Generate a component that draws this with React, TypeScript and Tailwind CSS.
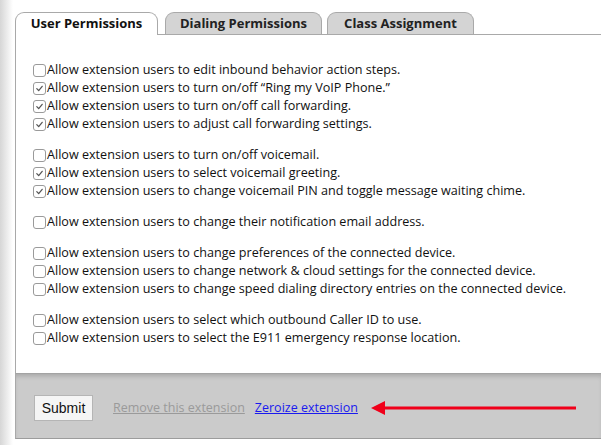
const groups: { label: string; checked: boolean }[][] = [
  [
    { label: "Allow extension users to edit inbound behavior action steps.", checked: false },
    { label: "Allow extension users to turn on/off \u201cRing my VoIP Phone.\u201d", checked: true },
    { label: "Allow extension users to turn on/off call forwarding.", checked: true },
    { label: "Allow extension users to adjust call forwarding settings.", checked: true },
  ],
  [
    { label: "Allow extension users to turn on/off voicemail.", checked: false },
    { label: "Allow extension users to select voicemail greeting.", checked: true },
    { label: "Allow extension users to change voicemail PIN and toggle message waiting chime.", checked: true },
  ],
  [{ label: "Allow extension users to change their notification email address.", checked: false }],
  [
    { label: "Allow extension users to change preferences of the connected device.", checked: false },
    { label: "Allow extension users to change network & cloud settings for the connected device.", checked: false },
    { label: "Allow extension users to change speed dialing directory entries on the connected device.", checked: false },
  ],
  [
    { label: "Allow extension users to select which outbound Caller ID to use.", checked: false },
    { label: "Allow extension users to select the E911 emergency response location.", checked: false },
  ],
];

function Checkbox({ checked }: { checked: boolean }) {
  return (
    <span className="flex h-[13px] w-[13px] shrink-0 items-center justify-center rounded-[3px] border border-[#9a9a9a] bg-white">
      {checked && (
        <svg viewBox="0 0 10 10" className="h-[9px] w-[9px]">
          <path d="M2 5.2 L4.1 7.4 L8 2.6" fill="none" stroke="#555" strokeWidth="1.4" strokeLinecap="round" strokeLinejoin="round" />
        </svg>
      )}
    </span>
  );
}

export default function App() {
  return (
    <div className="flex h-[445px] w-[601px] overflow-hidden bg-white" style={{ fontFamily: "'Open Sans', sans-serif" }}>
      {/* left page shadow */}
      <div className="w-[13px] shrink-0 bg-gradient-to-r from-[#d6d6d6] to-white" />

      <div className="ml-[2px] flex flex-1 flex-col pt-[12px]">
        {/* Tabs */}
        <div className="flex items-end border-b border-[#a9a9a9]">
          <div className="-mb-px flex h-[23px] w-[143px] items-center justify-center rounded-t-[9px] border border-b-0 border-[#a9a9a9] bg-white text-[13px] font-bold text-[#111]">
            User Permissions
          </div>
          <div className="ml-[7px] flex h-[22px] w-[157px] items-center justify-center rounded-t-[9px] border border-b-0 border-[#a9a9a9] bg-[#d4d4d4] text-[13px] font-bold text-[#222]">
            Dialing Permissions
          </div>
          <div className="ml-[5px] flex h-[22px] w-[147px] items-center justify-center rounded-t-[9px] border border-b-0 border-[#a9a9a9] bg-[#d4d4d4] text-[13px] font-bold text-[#222]">
            Class Assignment
          </div>
        </div>

        {/* Options */}
        <div className="flex flex-1 flex-col gap-[13px] border-l border-[#a9a9a9] pl-[17px] pt-[26px]">
          {groups.map((g, i) => (
            <div key={i} className="flex flex-col">
              {g.map((o) => (
                <label key={o.label} className="flex h-[18px] items-center gap-[1px] text-[12.6px] text-[#111]">
                  <Checkbox checked={o.checked} />
                  <span className="whitespace-nowrap">{o.label}</span>
                </label>
              ))}
            </div>
          ))}
        </div>

        {/* Footer */}
        <div className="flex h-[66px] items-center border-y border-l border-t-[#a3a3a3] border-b-[#9c9c9c] border-l-[#a9a9a9] bg-[#cbcbcb] pl-[18px] pt-[4px] shadow-[inset_0_4px_5px_-2px_rgba(0,0,0,0.18)]">
          <button className="h-[26px] w-[59px] border border-[#b5b5b5] bg-[#f5f5f5] text-[14px] text-[#111]" style={{ fontFamily: "'Liberation Sans', Arial, sans-serif" }}>
            Submit
          </button>
          <a className="ml-[20px] text-[12.5px] text-[#9a9a9a] underline">Remove this extension</a>
          <a className="ml-[10px] text-[12.5px] text-[#1a1aee] underline">Zeroize extension</a>
          <svg width="206" height="16" viewBox="0 0 206 16" className="ml-[13px]">
            <path d="M13 8 H205" stroke="#f0001a" strokeWidth="3" />
            <path d="M0 8 L14 1 L14 15 Z" fill="#f0001a" />
          </svg>
        </div>
        <div className="h-[6px]" />
      </div>
    </div>
  );
}
